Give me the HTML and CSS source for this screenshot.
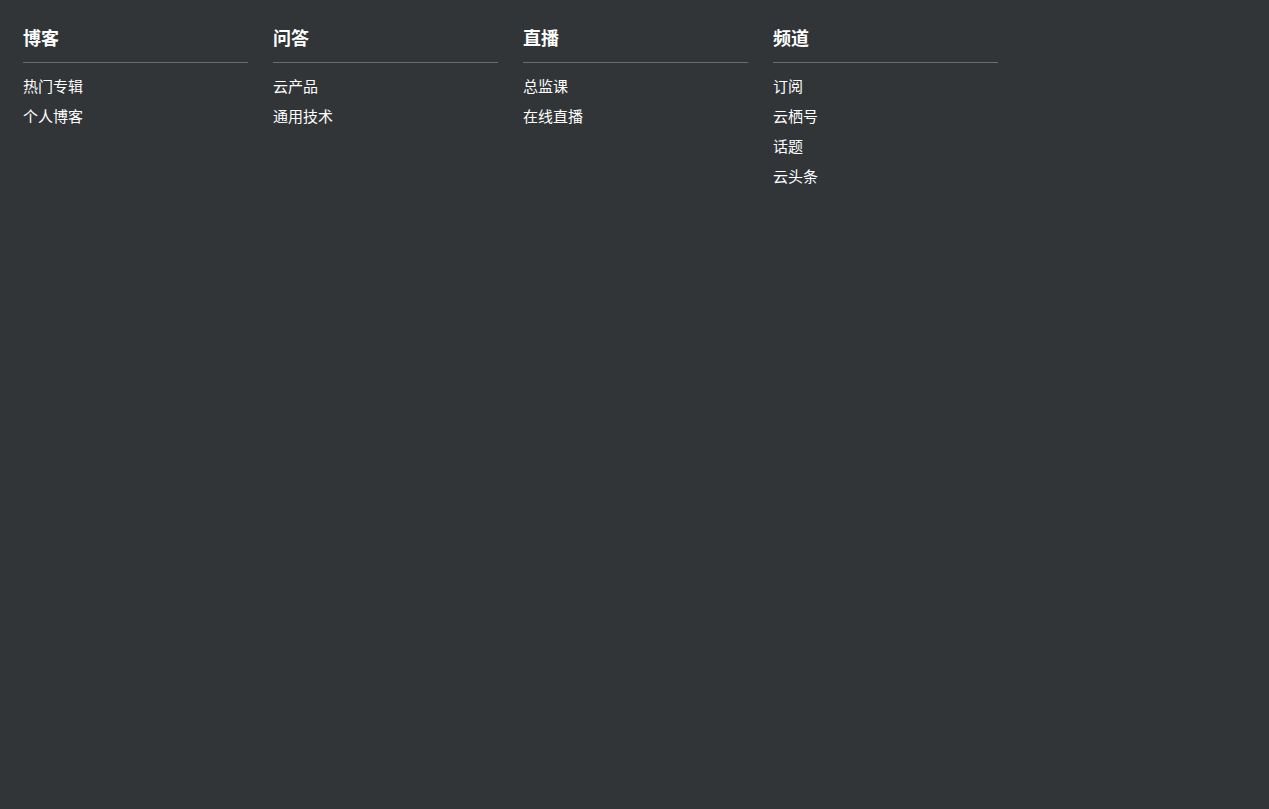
FILE: index.html
```html
<!DOCTYPE html>
<html lang="zh">
<head>
<meta charset="utf-8">
<link rel="stylesheet" href="styles.css">
</head>
<body>
<div class="menu">
  <div class="col">
    <div class="title">博客</div>
    <ul class="list"><li>热门专辑</li><li>个人博客</li></ul>
  </div>
  <div class="col">
    <div class="title">问答</div>
    <ul class="list"><li>云产品</li><li>通用技术</li></ul>
  </div>
  <div class="col">
    <div class="title">直播</div>
    <ul class="list"><li>总监课</li><li>在线直播</li></ul>
  </div>
  <div class="col">
    <div class="title">频道</div>
    <ul class="list"><li>订阅</li><li>云栖号</li><li>话题</li><li>云头条</li></ul>
  </div>
</div>
</body>
</html>
```
FILE: styles.css
```css
html, body {
  margin: 0;
  padding: 0;
  height: 100%;
}
body {
  background: #313538;
  font-family: "Microsoft YaHei", "Noto Sans CJK SC", sans-serif;
  color: #ffffff;
}
.menu {
  display: flex;
  gap: 25px;
  padding: 23px 23px 0;
}
.col {
  width: 225px;
}
.title {
  font-size: 18px;
  font-weight: bold;
  line-height: 28px;
  padding-bottom: 11px;
  border-bottom: 1px solid #6a6d70;
}
.list {
  list-style: none;
  margin: 0;
  padding: 8px 0 0;
}
.list li {
  font-size: 15px;
  line-height: 30px;
}
```
